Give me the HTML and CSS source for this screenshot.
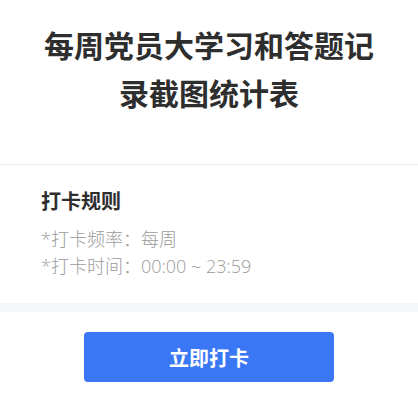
FILE: index.html
```html
<!DOCTYPE html>
<html lang="zh-CN">
<head>
<meta charset="utf-8">
<title>每周党员大学习和答题记录截图统计表</title>
<link rel="stylesheet" href="styles.css">
</head>
<body>
<div class="page">
  <header class="title-block">
    <h1 class="title">每周党员大学习和答题记录截图统计表</h1>
  </header>
  <section class="rules">
    <h2 class="rules-heading">打卡规则</h2>
    <p class="rule-line">*打卡频率：每周</p>
    <p class="rule-line">*打卡时间：00:00 ~ 23:59</p>
  </section>
  <div class="band"></div>
  <div class="action">
    <button class="checkin-btn" type="button">立即打卡</button>
  </div>
</div>
</body>
</html>
```

FILE: styles.css
```css
html, body {
  margin: 0;
  padding: 0;
  background: #ffffff;
}

body {
  font-family: "Open Sans", "Noto Sans CJK SC", sans-serif;
  color: #333333;
}

.page {
  width: 418px;
}

.title-block {
  padding: 20px 30px 48px;
  border-bottom: 1px solid #eeeeee;
}

.title {
  margin: 0;
  font-family: "Noto Sans CJK SC", sans-serif;
  font-size: 30px;
  font-weight: 700;
  line-height: 48px;
  text-align: center;
  color: #2e2e2e;
}

.rules {
  padding: 22px 41px 23px;
}

.rules-heading {
  margin: 0 0 11px;
  font-family: "Noto Sans CJK SC", sans-serif;
  font-size: 20px;
  font-weight: 700;
  line-height: 28px;
  color: #2e2e2e;
}

.rule-line {
  margin: 0;
  font-size: 18px;
  font-weight: 300;
  line-height: 27px;
  color: #9b9b9b;
}

.band {
  height: 9px;
  background: #f5f6fa;
}

.action {
  display: flex;
  justify-content: center;
  padding-top: 20px;
}

.checkin-btn {
  width: 250px;
  height: 50px;
  border: none;
  border-radius: 4px;
  background: #3a77f5;
  color: #ffffff;
  font-family: "Noto Sans CJK SC", sans-serif;
  font-size: 20px;
  font-weight: 700;
  padding: 0;
  cursor: pointer;
}
```
